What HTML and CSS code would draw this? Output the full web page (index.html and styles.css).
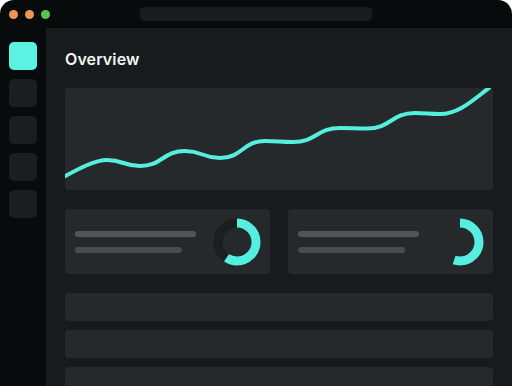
FILE: index.html
```html
<!DOCTYPE html>
<html>
<head>
<meta charset="utf-8">
<link rel="stylesheet" href="styles.css">
</head>
<body>
<div class="window">
  <div class="titlebar">
    <div class="dots">
      <span class="dot orange"></span>
      <span class="dot orange"></span>
      <span class="dot green"></span>
    </div>
    <div class="urlbar"></div>
    <div></div>
  </div>
  <div class="main">
    <nav class="sidebar">
      <span class="nav-item active"></span>
      <span class="nav-item"></span>
      <span class="nav-item"></span>
      <span class="nav-item"></span>
      <span class="nav-item"></span>
    </nav>
    <section class="content">
      <h1 class="title">Overview</h1>
      <div class="chart-card">
        <svg class="chart" width="428" height="102" viewBox="0 0 428 102">
          <path d="M-6,91.5 C8,84 28,72 42,72 C58.5,72 58.5,78 75,78 C97.5,78 97.5,63 120,63 C137.5,63 137.5,70 155,70 C177.5,70 177.5,53 200,53 C214,53 214,54 228,54 C251.5,54 251.5,40 275,40 C288.5,40 288.5,40.5 302,40.5 C326,40.5 326,25 350,25 C362.5,25 362.5,26 375,26 C395,26 410,10 428,-3" fill="none" stroke="#55efe0" stroke-width="4" stroke-linecap="round"/>
        </svg>
      </div>
      <div class="stats">
        <div class="stat-card">
          <div class="lines">
            <span class="line line-long"></span>
            <span class="line line-short"></span>
          </div>
          <svg class="donut" width="48" height="48" viewBox="0 0 48 48">
            <circle cx="24" cy="24" r="19" fill="none" stroke="#1a1e20" stroke-width="9"/>
            <circle cx="24" cy="24" r="19" fill="none" stroke="#55efe0" stroke-width="9" stroke-dasharray="70.4 200" transform="rotate(-90 24 24)"/>
          </svg>
        </div>
        <div class="stat-card">
          <div class="lines">
            <span class="line line-long"></span>
            <span class="line line-short"></span>
          </div>
          <svg class="donut" width="48" height="48" viewBox="0 0 48 48">
            <circle cx="24" cy="24" r="19" fill="none" stroke="#55efe0" stroke-width="9" stroke-dasharray="65.3 200" transform="rotate(-90 24 24)"/>
          </svg>
        </div>
      </div>
      <div class="rows">
        <div class="row"></div>
        <div class="row"></div>
        <div class="row"></div>
      </div>
    </section>
  </div>
</div>
</body>
</html>
```

FILE: styles.css
```css
* { box-sizing: border-box; }
html, body {
  margin: 0;
  padding: 0;
  background: #ffffff;
}
body {
  font-family: Inter, "Noto Sans", sans-serif;
  width: 512px;
  height: 386px;
  overflow: hidden;
}
.window {
  width: 512px;
  height: 386px;
  background: #080b0c;
  border-radius: 14px 14px 0 0;
  overflow: hidden;
  display: flex;
  flex-direction: column;
}
.titlebar {
  height: 28px;
  flex: none;
  display: grid;
  grid-template-columns: 1fr 232px 1fr;
  align-items: center;
}
.dots {
  display: flex;
  gap: 7px;
  padding-left: 9px;
}
.dot {
  width: 9px;
  height: 9px;
  border-radius: 50%;
}
.orange { background: #ef9553; }
.green { background: #55c655; }
.urlbar {
  height: 14px;
  background: #181c1e;
  border-radius: 4px;
}
.main {
  flex: 1;
  display: flex;
  min-height: 0;
}
.sidebar {
  width: 46px;
  flex: none;
  display: flex;
  flex-direction: column;
  gap: 9px;
  padding: 14px 0 0 9px;
}
.nav-item {
  width: 28px;
  height: 28px;
  border-radius: 5px;
  background: #1a1e20;
}
.nav-item.active { background: #5cf2e2; }
.content {
  flex: 1;
  background: #171b1e;
  padding: 21px 19px 0 19px;
  overflow: hidden;
}
.title {
  margin: 0 0 19px 0;
  font-size: 16px;
  line-height: 20px;
  font-weight: 600;
  color: #f4f5f5;
  letter-spacing: 0.1px;
}
.chart-card {
  height: 102px;
  background: #25292b;
  border-radius: 4px;
  overflow: hidden;
}
.chart { display: block; }
.stats {
  display: grid;
  grid-template-columns: 1fr 1fr;
  gap: 18px;
  margin-top: 19px;
}
.stat-card {
  height: 65px;
  background: #25292b;
  border-radius: 4px;
  display: flex;
  align-items: center;
  justify-content: space-between;
  padding: 0 9px 0 10px;
}
.lines {
  display: flex;
  flex-direction: column;
  gap: 10px;
}
.line {
  display: block;
  height: 6px;
  border-radius: 3px;
}
.line-long { width: 121px; background: #4e5757; }
.line-short { width: 107px; background: #454d4d; }
.donut { display: block; }
.rows {
  display: flex;
  flex-direction: column;
  gap: 9px;
  margin-top: 19px;
}
.row {
  height: 28px;
  background: #25292b;
  border-radius: 4px;
  flex: none;
}
```
